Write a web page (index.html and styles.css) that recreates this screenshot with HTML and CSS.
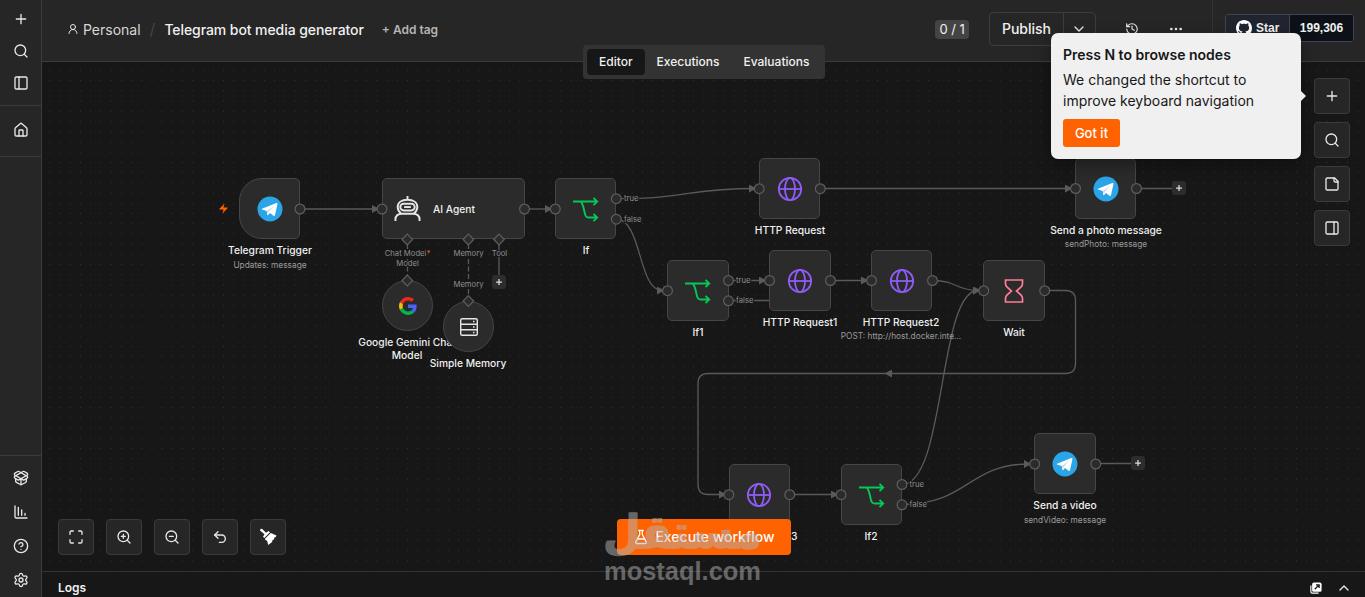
FILE: index.html
```html
<!DOCTYPE html>
<html lang="en">
<head>
    <meta charset="UTF-8">
    <meta name="viewport" content="width=device-width, initial-scale=1.0">
    <title>Telegram bot media generator</title>
    <link rel="stylesheet" href="styles.css">
</head>
<body>
    <!-- Shared icons -->
    <svg class="sprite" aria-hidden="true">
        <symbol id="plus" viewBox="0 0 24 24"><path d="M5 12h14M12 5v14"/></symbol>
        <symbol id="search" viewBox="0 0 24 24"><circle cx="11" cy="11" r="8"/><path d="m21 21-4.3-4.3"/></symbol>
        <symbol id="globe" viewBox="0 0 26 26"><circle cx="13" cy="13" r="11.2"/><ellipse cx="13" cy="13" rx="5" ry="11.2"/><path d="M1.8 13h22.4"/></symbol>
        <symbol id="branch" viewBox="0 0 28 26"><path d="M1 5.5h24M21.500 1.800 25.200 5.500l-3.700 3.700M8.500 5.500c2.500 2 3 6 4 10.500.8 4 1.500 5.500 4.500 5.500h8M21.500 17.800l3.700 3.700-3.700 3.700"/></symbol>
        <symbol id="telegram" viewBox="0 0 26 26"><circle cx="13" cy="13" r="12.500" fill="#2aa5e8"/><path d="M5 12.800 19.300 7.100c.8-.3 1.300.2 1.100 1.100l-2.400 11c-.2.8-.8 1-1.400.6l-3.600-2.700-1.800 1.800c-.4.400-.9.300-1-.2l-.5-3.700-4.600-1.400c-.7-.2-.7-.6-.1-.8z" fill="#fff"/><path d="m9.700 15 7.500-5.300-5.700 6.200-.5 2.700z" fill="#c8daea"/></symbol>
    </svg>

    <aside class="sidebar">
        <nav class="side-group">
            <svg class="icon"><use href="#plus"/></svg>
            <svg class="icon"><use href="#search"/></svg>
            <svg class="icon" viewBox="0 0 24 24"><rect x="3" y="3" width="18" height="18" rx="2"/><path d="M9 3v18"/></svg>
        </nav>
        <nav class="side-group side-home">
            <svg class="icon" viewBox="0 0 24 24"><path d="M15 21v-8a1 1 0 0 0-1-1h-4a1 1 0 0 0-1 1v8"/><path d="M3 10a2 2 0 0 1 .709-1.528l7-5.999a2 2 0 0 1 2.582 0l7 5.999A2 2 0 0 1 21 10v9a2 2 0 0 1-2 2H5a2 2 0 0 1-2-2z"/></svg>
        </nav>
        <nav class="side-group side-bottom">
            <svg class="icon" viewBox="0 0 24 24"><path d="M12 22v-9M15.170 2.210a1.670 1.670 0 0 1 1.630 0L21 4.570a1.930 1.930 0 0 1 0 3.360L8.820 14.790a1.655 1.655 0 0 1-1.640 0L3 12.430a1.930 1.930 0 0 1 0-3.360z"/><path d="M20 13v3.870a2.060 2.060 0 0 1-1.110 1.830l-6 3.080a1.930 1.930 0 0 1-1.780 0l-6-3.080A2.060 2.060 0 0 1 4 16.870V13"/><path d="M21 12.430a1.930 1.930 0 0 0 0-3.360L8.830 2.200a1.640 1.640 0 0 0-1.630 0L3 4.570a1.930 1.930 0 0 0 0 3.360l12.180 6.860a1.636 1.636 0 0 0 1.630 0z"/></svg>
            <svg class="icon" viewBox="0 0 24 24"><path d="M13 17V9M18 17v-3M3 3v16a2 2 0 0 0 2 2h16M8 17V5"/></svg>
            <svg class="icon" viewBox="0 0 24 24"><circle cx="12" cy="12" r="10"/><path d="M9.090 9a3 3 0 0 1 5.830 1c0 2-3 3-3 3M12 17h.01"/></svg>
            <svg class="icon" viewBox="0 0 24 24"><path d="M9.671 4.136a2.340 2.340 0 0 1 4.659 0 2.340 2.340 0 0 0 3.319 1.915 2.340 2.340 0 0 1 2.330 4.033 2.340 2.340 0 0 0 0 3.831 2.340 2.340 0 0 1-2.330 4.033 2.340 2.340 0 0 0-3.319 1.915 2.340 2.340 0 0 1-4.659 0 2.340 2.340 0 0 0-3.320-1.915 2.340 2.340 0 0 1-2.330-4.033 2.340 2.340 0 0 0 0-3.831A2.340 2.340 0 0 1 6.350 6.051a2.340 2.340 0 0 0 3.319-1.915"/><circle cx="12" cy="12" r="3"/></svg>
        </nav>
    </aside>

    <main class="main">
        <header class="header">
            <svg class="icon user" viewBox="0 0 24 24"><circle cx="12" cy="8" r="5"/><path d="M20 21a8 8 0 0 0-16 0"/></svg>
            <span class="project">Personal</span>
            <span class="slash">/</span>
            <h1 class="title">Telegram bot media generator</h1>
            <span class="add-tag">+ Add tag</span>

            <div class="actions">
                <span class="counter">0 / 1</span>
                <div class="publish">
                    <span class="publish-label">Publish</span>
                    <span class="publish-more"><svg class="icon" viewBox="0 0 24 24"><path d="m6 9 6 6 6-6"/></svg></span>
                </div>
                <svg class="icon history" viewBox="0 0 24 24"><path d="M3 12a9 9 0 1 0 9-9 9.750 9.750 0 0 0-6.740 2.740L3 8"/><path d="M3 3v5h5M12 7v5l4 2"/></svg>
                <svg class="icon dots" viewBox="0 0 24 24"><circle cx="5" cy="12" r="1"/><circle cx="12" cy="12" r="1"/><circle cx="19" cy="12" r="1"/></svg>
            </div>
            <div class="github">
                <div class="star">
                    <svg class="octocat" viewBox="0 0 16 16"><path d="M8 0C3.580 0 0 3.580 0 8c0 3.540 2.290 6.530 5.470 7.590.4.070.55-.17.55-.38 0-.19-.01-.82-.01-1.490-2.010.37-2.530-.49-2.690-.94-.09-.23-.48-.94-.82-1.130-.28-.15-.68-.52-.01-.53.63-.01 1.080.58 1.230.82.72 1.210 1.870.87 2.330.66.070-.52.280-.87.510-1.070-1.780-.2-3.640-.89-3.640-3.950 0-.87.310-1.590.82-2.150-.08-.2-.36-1.020.08-2.120 0 0 .67-.21 2.200.82.640-.18 1.320-.27 2-.27s1.360.09 2 .27c1.530-1.040 2.200-.82 2.200-.82.440 1.100.160 1.920.080 2.120.510.560.820 1.270.820 2.150 0 3.070-1.870 3.750-3.650 3.950.290.250.540.730.540 1.480 0 1.070-.01 1.930-.01 2.200 0 .210.150.460.550.380A8.010 8.010 0 0 0 16 8c0-4.420-3.580-8-8-8z"/></svg>
                    <span>Star</span>
                </div>
                <div class="star-count">199,306</div>
            </div>
        </header>

        <section class="canvas">
            <div class="board">
                <svg class="edges" viewBox="0 0 1365 597">
                    <defs>
                        <marker id="arrow" viewBox="0 0 8 8" refX="5" refY="4" markerWidth="8" markerHeight="8" markerUnits="userSpaceOnUse" orient="auto"><path class="arrow-head" d="M0 0 7.500 4 0 8z"/></marker>
                    </defs>
                    <g marker-end="url(#arrow)">
                        <path d="M300 209H377"/>
                        <path d="M525 209H550"/>
                        <path d="M616 198.700C688 198.700 688 188.500 754 188.500"/>
                        <path d="M616 219C642 219 638 290.500 662 290.500"/>
                        <path d="M820 188.500H1070"/>
                        <path d="M729 280.500H764"/>
                        <path d="M830 280.500H866"/>
                        <path d="M932 280.500C958 280.500 955 290.500 978 290.500"/>
                        <path d="M902 484.500C946 484.500 938 290.500 978 290.500"/>
                        <path d="M902 504.500C968 504.500 968 464 1029 464"/>
                        <path d="M1045 290.500h20.500q10 0 10 10v63q0 10-10 10H887"/>
                        <path d="M888 373.500H708q-10 0-10 10v101q0 10 10 10H724"/>
                        <path d="M790 494.500H836"/>
                    </g>
                    <path d="M729 300.500H771"/>
                    <path d="M1137 188.500H1172M1096 463.500H1131M499 244V276"/>
                    <path class="dashed" d="M407.500 244V277M468.500 244V297"/>
                </svg>

                <div class="node trigger"><svg class="logo"><use href="#telegram"/></svg></div>
                <div class="label trigger-label">Telegram Trigger<small>Updates: message</small></div>
                <svg class="bolt" viewBox="0 0 24 24"><path d="M4 14a1 1 0 0 1-.78-1.630l9.900-10.200a.5.5 0 0 1 .86.460l-1.920 6.020A1 1 0 0 0 13 10h7a1 1 0 0 1 .78 1.630l-9.900 10.200a.5.5 0 0 1-.86-.46l1.920-6.020A1 1 0 0 0 11 14z"/></svg>

                <div class="node agent">
                    <svg class="robot" viewBox="0 0 28 28"><path d="M14 1v4M7.500 19.500C5 17.500 3.800 15 3.800 12.500 3.800 8 7.800 5 14 5s10.200 3 10.200 7.500c0 2.500-1.200 5-3.700 7M1.500 27v-1.500c0-4 3-6 7-6h11c4 0 7 2 7 6V27"/><rect x="6.500" y="9" width="15" height="7" rx="3.500"/><path d="M10.500 12.500h7"/></svg>
                </div>
                <div class="label agent-label">AI Agent</div>

                <div class="node circle gemini">
                    <svg class="google" viewBox="0 0 48 48"><path fill="#ea2a1a" d="M24 9.500c3.540 0 6.710 1.220 9.210 3.600l6.850-6.850C35.900 2.380 30.470 0 24 0 14.620 0 6.510 5.380 2.560 13.220l7.980 6.190C12.430 13.720 17.740 9.500 24 9.500z"/><path fill="#4a62f5" d="M46.980 24.550c0-1.570-.15-3.090-.38-4.550H24v9.020h12.940c-.58 2.960-2.260 5.480-4.780 7.180l7.730 6c4.510-4.180 7.090-10.360 7.090-17.650z"/><path fill="#fbbc05" d="M10.530 28.590c-.48-1.450-.76-2.990-.76-4.590s.27-3.140.76-4.590l-7.980-6.190C.92 16.460 0 20.120 0 24s.92 7.540 2.560 10.780z"/><path fill="#00b84a" d="M24 48c6.480 0 11.930-2.130 15.890-5.810l-7.730-6c-2.150 1.450-4.920 2.300-8.160 2.300-6.260 0-11.570-4.220-13.470-9.910l-7.980 6.190C6.510 42.620 14.620 48 24 48z"/></svg>
                </div>
                <div class="label gemini-label">Google Gemini Chat Model</div>
                <div class="node circle memory">
                    <svg class="database" viewBox="0 0 20 20"><rect x="1.700" y="1.700" width="16.600" height="16.600" rx="1.500"/><path d="M2 7.200h16M2 12.800h16M14 4.500h1.500M14 10h1.500M14 15.500h1.500"/></svg>
                </div>
                <div class="label memory-label">Simple Memory</div>

                <div class="node if"><svg class="fork"><use href="#branch"/></svg></div>
                <div class="label if-label">If</div>
                <div class="node http"><svg class="globe"><use href="#globe"/></svg></div>
                <div class="label http-label">HTTP Request</div>
                <div class="node photo"><svg class="logo"><use href="#telegram"/></svg></div>
                <div class="label photo-label">Send a photo message<small>sendPhoto: message</small></div>

                <div class="node if1"><svg class="fork"><use href="#branch"/></svg></div>
                <div class="label if1-label">If1</div>
                <div class="node http1"><svg class="globe"><use href="#globe"/></svg></div>
                <div class="label http1-label">HTTP Request1</div>
                <div class="node http2"><svg class="globe"><use href="#globe"/></svg></div>
                <div class="label http2-label">HTTP Request2<small>POST: http://host.docker.inte...</small></div>
                <div class="node wait"><svg class="hourglass" viewBox="0 0 20 26"><path d="M1.500 2h17v3.500q0 2-1.400 3.300L12.500 13l4.600 4.200q1.400 1.300 1.400 3.300V24h-17v-3.500q0-2 1.400-3.300L7.500 13 2.900 8.800Q1.500 7.500 1.500 5.500z"/></svg></div>
                <div class="label wait-label">Wait</div>

                <div class="node http3"><svg class="globe"><use href="#globe"/></svg></div>
                <div class="label http3-label">HTTP Request3</div>
                <div class="node if2"><svg class="fork"><use href="#branch"/></svg></div>
                <div class="label if2-label">If2</div>
                <div class="node video"><svg class="logo"><use href="#telegram"/></svg></div>
                <div class="label video-label">Send a video<small>sendVideo: message</small></div>

                <!-- Connection points and their names -->
                <svg class="ports" viewBox="0 0 1365 597">
                    <circle cx="300" cy="209" r="4.900"/><circle cx="382" cy="209" r="4.900"/>
                    <circle cx="524.500" cy="209" r="4.900"/><circle cx="555.300" cy="209" r="4.900"/>
                    <circle cx="616.300" cy="198.700" r="4.900"/><circle cx="616.300" cy="219.200" r="4.900"/>
                    <circle cx="759.200" cy="188.700" r="4.900"/><circle cx="820.300" cy="188.700" r="4.900"/>
                    <circle cx="1075.500" cy="188.500" r="4.900"/><circle cx="1136.500" cy="188.500" r="4.900"/>
                    <circle cx="667.500" cy="290.700" r="4.900"/><circle cx="728.500" cy="280.500" r="4.900"/><circle cx="728.500" cy="300.800" r="4.900"/>
                    <circle cx="769.500" cy="280.500" r="4.900"/><circle cx="830.500" cy="280.500" r="4.900"/>
                    <circle cx="871.500" cy="280.500" r="4.900"/><circle cx="932.500" cy="280.500" r="4.900"/>
                    <circle cx="983.700" cy="290.700" r="4.900"/><circle cx="1044.700" cy="290.700" r="4.900"/>
                    <circle cx="728.800" cy="494.700" r="4.900"/><circle cx="789.800" cy="494.700" r="4.900"/>
                    <circle cx="841" cy="494.700" r="4.900"/><circle cx="902" cy="484.500" r="4.900"/><circle cx="902" cy="504.800" r="4.900"/>
                    <circle cx="1034.700" cy="464" r="4.900"/><circle cx="1095.800" cy="464" r="4.900"/>
                    <path d="m407.300 234.200 5.300 5.300-5.300 5.300-5.300-5.300zM468.400 234.200l5.300 5.300-5.300 5.300-5.300-5.300zM499 234.200l5.300 5.300-5.300 5.300-5.300-5.300zM407.300 275.200l5.300 5.300-5.300 5.300-5.300-5.300zM468.400 295.700l5.300 5.300-5.300 5.300-5.300-5.300z"/>
                    <text x="624" y="201.400">true</text>
                    <text x="624" y="222">false</text>
                    <text x="736" y="283.400">true</text>
                    <text x="736" y="303.400">false</text>
                    <text x="909.500" y="487.400">true</text>
                    <text x="909.500" y="507.400">false</text>
                    <g text-anchor="middle">
                        <text x="407.500" y="256.400">Chat Model<tspan class="required">*</tspan></text>
                        <text x="407.500" y="266.400">Model</text>
                        <text x="468.500" y="256.400">Memory</text>
                        <text x="468.500" y="287.400">Memory</text>
                        <text x="499.500" y="256.400">Tool</text>
                    </g>
                </svg>
                <svg class="add add-photo"><use href="#plus"/></svg>
                <svg class="add add-video"><use href="#plus"/></svg>
                <svg class="add add-tool"><use href="#plus"/></svg>
            </div>

            <div class="tools">
                <button><svg class="icon" viewBox="0 0 24 24"><path d="M8 3H5a2 2 0 0 0-2 2v3M21 8V5a2 2 0 0 0-2-2h-3M3 16v3a2 2 0 0 0 2 2h3M16 21h3a2 2 0 0 0 2-2v-3"/></svg></button>
                <button><svg class="icon" viewBox="0 0 24 24"><circle cx="11" cy="11" r="8"/><path d="m21 21-4.350-4.350M11 8v6M8 11h6"/></svg></button>
                <button><svg class="icon" viewBox="0 0 24 24"><circle cx="11" cy="11" r="8"/><path d="m21 21-4.350-4.350M8 11h6"/></svg></button>
                <button><svg class="icon" viewBox="0 0 24 24"><path d="M9 14 4 9l5-5"/><path d="M4 9h10.500a5.500 5.500 0 0 1 0 11H11"/></svg></button>
                <button><svg class="broom" viewBox="0 0 18 18"><path d="M1.500 1 3 .8l4 3.900L9.600 3 11 4.300 5.300 10 4 8.700l1.500-2.500L1 2.500z"/><path d="m11.800 5 5.700 2.600-1 1.600-1.200.2-.3 2-1.500.6-.4 1.900-3.900 3-1-4-2-1.200L6 10.700z"/></svg></button>
            </div>

            <button class="execute">
                <svg class="icon" viewBox="0 0 24 24"><path d="M14 2v6a2 2 0 0 0 .245.960l5.510 10.080A2 2 0 0 1 18 22H6a2 2 0 0 1-1.755-2.960l5.510-10.080A2 2 0 0 0 10 8V2M6.453 15h11.094M8.500 2h7"/></svg>
                Execute workflow
            </button>

            <div class="panel-buttons">
                <button><svg class="icon"><use href="#plus"/></svg></button>
                <button><svg class="icon"><use href="#search"/></svg></button>
                <button><svg class="icon" viewBox="0 0 24 24"><path d="M16 3H5a2 2 0 0 0-2 2v14a2 2 0 0 0 2 2h14a2 2 0 0 0 2-2V8Z"/><path d="M15 3v4a2 2 0 0 0 2 2h4"/></svg></button>
                <button><svg class="icon" viewBox="0 0 24 24"><rect x="3" y="3" width="18" height="18" rx="2"/><path d="M15 3v18"/></svg></button>
            </div>
        </section>

        <footer class="logs">
            <span>Logs</span>
            <div class="logs-actions">
                <svg class="popout" viewBox="0 0 14 14"><path class="back" d="M1 4v7.500Q1 13 2.500 13H10"/><rect x="2.500" y="0.500" width="11" height="11" rx="2"/><path class="out" d="M5.500 8.500 10.500 3.500M7 3.300h3.700V7"/></svg>
                <svg class="icon" viewBox="0 0 24 24"><path d="m18 15-6-6-6 6"/></svg>
            </div>
        </footer>
    </main>

    <div class="tabs">
        <span class="tab active">Editor</span>
        <span class="tab">Executions</span>
        <span class="tab">Evaluations</span>
    </div>

    <div class="tooltip">
        <strong>Press N to browse nodes</strong>
        <p>We changed the shortcut to improve keyboard navigation</p>
        <button>Got it</button>
    </div>

    <svg class="watermark" viewBox="0 0 170 100">
        <text class="wm-arabic" x="3" y="48" textLength="159" lengthAdjust="spacingAndGlyphs">مستقل</text>
        <text class="wm-latin" x="4" y="80" textLength="157" lengthAdjust="spacingAndGlyphs">mostaql.com</text>
    </svg>
</body>
</html>
```
FILE: styles.css
```css
* {
    margin: 0;
    padding: 0;
    box-sizing: border-box;
}

body {
    display: flex;
    position: relative;
    width: 100%;
    height: 100vh;
    overflow: hidden;
    background: #171717;
    color: #f0f0f0;
    font-family: Inter, sans-serif;
    font-size: 14px;
}

button {
    font: inherit;
    color: inherit;
}

.sprite {
    position: absolute;
    width: 0;
    height: 0;
}

.icon {
    display: block;
    flex: none;
    width: 16px;
    height: 16px;
    fill: none;
    stroke: #e8e8e8;
    stroke-width: 2;
    stroke-linecap: round;
    stroke-linejoin: round;
}

/* Sidebar */
.sidebar {
    display: flex;
    flex-direction: column;
    width: 42px;
    flex: none;
    background: #262626;
    border-right: 1px solid #3b3b3b;
}

.side-group {
    display: flex;
    flex-direction: column;
    align-items: center;
    gap: 16px;
    padding-top: 11px;
    height: 106px;
    border-bottom: 1px solid #3b3b3b;
}

.side-home {
    height: 51px;
    padding-top: 16px;
}

.side-bottom {
    gap: 18px;
    height: 142px;
    margin-top: auto;
    padding-top: 14px;
    border-top: 1px solid #3b3b3b;
    border-bottom: 0;
}

/* Header */
.main {
    display: flex;
    flex-direction: column;
    flex: 1;
    min-width: 0;
}

.header {
    display: flex;
    align-items: center;
    height: 62px;
    flex: none;
    padding: 0 12px 3px 25px;
    background: #262626;
    border-bottom: 1px solid #3b3b3b;
    white-space: nowrap;
}

.header .user {
    width: 12px;
    height: 12px;
    margin-right: 4px;
}

.project {
    color: #d6d6d6;
}

.slash {
    margin: 0 9px 0 9px;
    color: #444;
    font-size: 16px;
}

.title {
    font-size: 14px;
    font-weight: 500;
    letter-spacing: -0.080px;
}

.add-tag {
    margin-left: 18px;
    color: #b5b5b5;
    font-size: 12px;
    font-weight: 600;
}

.actions {
    display: flex;
    align-items: center;
    height: 61px;
    margin-left: auto;
    padding-right: 28px;
    border-right: 1px solid #333;
}

.counter {
    padding: 0 4px;
    margin-right: 20px;
    border-radius: 4px;
    background: #444;
    font-size: 13px;
    line-height: 19px;
}

.publish {
    display: flex;
    height: 34px;
    margin-right: 29px;
    border: 1px solid #3d3d3d;
    border-radius: 4px;
    font-weight: 500;
    line-height: 32px;
}

.publish-label {
    padding: 0 12px;
}

.publish-more {
    display: flex;
    align-items: center;
    padding: 0 8px 0 7px;
    border-left: 1px solid #3d3d3d;
}

.history {
    width: 14px;
    height: 14px;
    margin-right: 29px;
}

.github {
    display: flex;
    margin: 0 -1px 3px 12px;
    height: 28px;
    border: 1px solid #3d4457;
    border-radius: 3px;
    font-family: "Liberation Sans", sans-serif;
    font-size: 12px;
    font-weight: bold;
    line-height: 26px;
}

.star {
    display: flex;
    align-items: center;
    gap: 4px;
    width: 64px;
    padding-left: 10px;
    border-right: 1px solid #3d4457;
    background: #20242e;
}

.octocat {
    width: 16px;
    height: 16px;
    fill: #fff;
}

.star-count {
    width: 63px;
    background: #0d1117;
    text-align: center;
}

.tabs {
    position: absolute;
    left: 583px;
    top: 45px;
    display: flex;
    height: 34px;
    padding: 4px;
    border-radius: 4px;
    background: #333;
    font-size: 12px;
    font-weight: 500;
    line-height: 26px;
}

.tab {
    padding: 0 12px;
    border-radius: 4px;
}

.tab.active {
    background: #171717;
}

/* Canvas */
.canvas {
    position: relative;
    flex: 1;
    overflow: hidden;
    background: #171717 radial-gradient(circle at 50% 50%, #353535 0.600px, transparent 0.900px) 2.700px 3.300px / 10.220px 10.220px;
}

.board {
    position: absolute;
    left: -42px;
    top: -62px;
    width: 1365px;
    height: 597px;
}

.edges,
.ports {
    position: absolute;
    left: 0;
    top: 0;
    width: 1365px;
    height: 597px;
}

.edges path {
    fill: none;
    stroke: #5a5a5a;
    stroke-width: 1.300;
}

.edges .dashed {
    stroke-dasharray: 5 2.500;
}

.edges .arrow-head {
    fill: #5a5a5a;
    stroke: none;
}

.ports circle,
.ports path {
    fill: #2b2b2b;
    stroke: #5e5e5e;
    stroke-width: 1.200;
}

.ports text {
    fill: #8e8e8e;
    stroke: #171717;
    stroke-width: 2px;
    paint-order: stroke;
    font-size: 7.700px;
}

.ports .required {
    fill: #ff6200;
}

.node {
    position: absolute;
    display: flex;
    align-items: center;
    justify-content: center;
    width: 61.400px;
    height: 61px;
    border: 1px solid #464646;
    border-radius: 5px;
    background: #2b2b2b;
}

.trigger { left: 239px; top: 178px; border-radius: 23px 5px 5px 23px; }
.if { left: 555px; top: 178px; }
.http { left: 759px; top: 158px; }
.photo { left: 1075px; top: 158px; }
.if1 { left: 667.300px; top: 260px; }
.http1 { left: 769.300px; top: 250px; }
.http2 { left: 871px; top: 250px; }
.wait { left: 983.400px; top: 260px; }
.http3 { left: 728.600px; top: 464px; }
.if2 { left: 840.800px; top: 464px; }
.video { left: 1034.300px; top: 433px; }

.agent {
    left: 382px;
    top: 178px;
    width: 143px;
    justify-content: flex-start;
    padding-left: 11px;
}

.circle {
    width: 51px;
    height: 51px;
    padding: 0;
    border-radius: 50%;
}

.gemini { left: 382px; top: 280px; }
.memory { left: 443px; top: 301px; }

.logo {
    width: 26px;
    height: 26px;
}

.globe {
    width: 26px;
    height: 26px;
    fill: none;
    stroke: #8f5cf7;
    stroke-width: 1.800;
}

.fork {
    width: 28px;
    height: 26px;
    margin-left: 1px;
    fill: none;
    stroke: #07c755;
    stroke-width: 1.900;
}

.robot {
    width: 27px;
    height: 27px;
    fill: none;
    stroke: #e6e6e6;
    stroke-width: 2;
}

.google {
    width: 18px;
    height: 18px;
}

.database {
    width: 20px;
    height: 20px;
    fill: none;
    stroke: #e6e6e6;
    stroke-width: 1.400;
}

.hourglass {
    width: 20px;
    height: 26px;
    fill: none;
    stroke: #ff7d95;
    stroke-width: 1.700;
}

.bolt {
    position: absolute;
    left: 218px;
    top: 203px;
    width: 11px;
    height: 11px;
    fill: #ff6200;
}

/* Node captions, drawn at the canvas zoom level */
.label {
    position: absolute;
    width: 160px;
    margin-left: -80px;
    font-size: 16px;
    font-weight: 500;
    line-height: 20px;
    text-align: center;
    transform: scale(0.640);
    transform-origin: 50% 0;
}

.label small {
    display: block;
    margin-top: 3px;
    color: #9b9b9b;
    font-size: 13px;
    font-weight: 400;
    line-height: 20px;
    white-space: nowrap;
}

.trigger-label { left: 269.500px; top: 244px; }
.agent-label { left: 453.500px; top: 203px; }
.gemini-label { left: 407.300px; top: 336px; }
.memory-label { left: 468.400px; top: 357px; }
.if-label { left: 585.800px; top: 244px; }
.http-label { left: 789.800px; top: 224px; }
.photo-label { left: 1106px; top: 224px; width: 200px; margin-left: -100px; }
.photo-label small { margin-top: 1px; }
.if1-label { left: 698px; top: 326px; }
.http1-label { left: 800px; top: 316px; }
.http2-label { left: 901px; top: 316px; width: 200px; margin-left: -100px; }
.http2-label small { margin-top: 1px; }
.wait-label { left: 1014px; top: 326px; }
.http3-label { left: 759.300px; top: 530px; }
.if2-label { left: 871.300px; top: 530px; }
.video-label { left: 1065px; top: 499px; }

.add {
    position: absolute;
    width: 14px;
    height: 14px;
    padding: 2px;
    border-radius: 3px;
    background: #2d2d2d;
    stroke: #ddd;
    stroke-width: 3;
}

.add-photo { left: 1172px; top: 181px; }
.add-video { left: 1131px; top: 456px; }
.add-tool { left: 492px; top: 275px; }

/* Floating controls */
.tools,
.panel-buttons {
    position: absolute;
    display: flex;
}

.tools {
    left: 16px;
    bottom: 16px;
    gap: 12px;
}

.panel-buttons {
    right: 15px;
    top: 16px;
    flex-direction: column;
    gap: 8px;
}

.tools button,
.panel-buttons button {
    display: flex;
    align-items: center;
    justify-content: center;
    width: 36px;
    height: 36px;
    border: 1px solid #3b3b3b;
    border-radius: 4px;
    background: #262626;
}

.broom {
    width: 18px;
    height: 18px;
    fill: #fff;
}

.execute {
    position: absolute;
    left: 575px;
    bottom: 16px;
    display: flex;
    align-items: center;
    justify-content: center;
    gap: 6px;
    width: 174px;
    height: 36px;
    padding-bottom: 1px;
    border: 0;
    border-radius: 4px;
    background: #ff6200;
    color: #fff;
    font-weight: 500;
}

.execute .icon {
    stroke: #fff;
}

/* Logs bar */
.logs {
    display: flex;
    align-items: center;
    justify-content: space-between;
    flex: none;
    height: 26px;
    padding: 6px 13px 0 16px;
    border-top: 1px solid #333;
    background: #171717;
    font-size: 12px;
    font-weight: 600;
}

.logs-actions {
    display: flex;
    align-items: center;
    gap: 14px;
}

.popout {
    width: 12px;
    height: 12px;
    fill: #fff;
}

.popout .back {
    fill: none;
    stroke: #fff;
    stroke-width: 1.300;
}

.popout .out {
    fill: none;
    stroke: #171717;
    stroke-width: 1.400;
}

/* Shortcut hint */
.tooltip {
    position: absolute;
    left: 1051px;
    top: 33px;
    width: 250px;
    height: 126px;
    padding: 12px;
    border-radius: 7px;
    background: #f0f0f0;
    box-shadow: 0 6px 16px rgba(0, 0, 0, 0.35);
    color: #171717;
    font-size: 14px;
    line-height: 21px;
}

.tooltip::after {
    content: "";
    position: absolute;
    left: 100%;
    top: 58px;
    border: 5px solid transparent;
    border-left-color: #f0f0f0;
    border-right: 0;
}

.tooltip strong {
    display: block;
    margin-bottom: 4px;
    font-weight: 600;
    line-height: 20px;
}

.tooltip button {
    display: block;
    width: 57px;
    height: 28px;
    margin-top: 8px;
    border: 0;
    border-radius: 3px;
    background: #ff6200;
    color: #fff;
    font-size: 13px;
    font-weight: 500;
}

.watermark {
    position: absolute;
    left: 600px;
    top: 500px;
    width: 170px;
    height: 100px;
    fill: #b4b4b4;
    opacity: 0.500;
}

.wm-arabic {
    font-family: "DejaVu Sans", sans-serif;
    font-size: 46px;
    font-weight: bold;
    stroke: #b4b4b4;
    stroke-width: 1.500px;
    stroke-linejoin: round;
}

.wm-latin {
    font-family: "Liberation Sans", sans-serif;
    font-size: 25px;
    font-weight: bold;
}
```
